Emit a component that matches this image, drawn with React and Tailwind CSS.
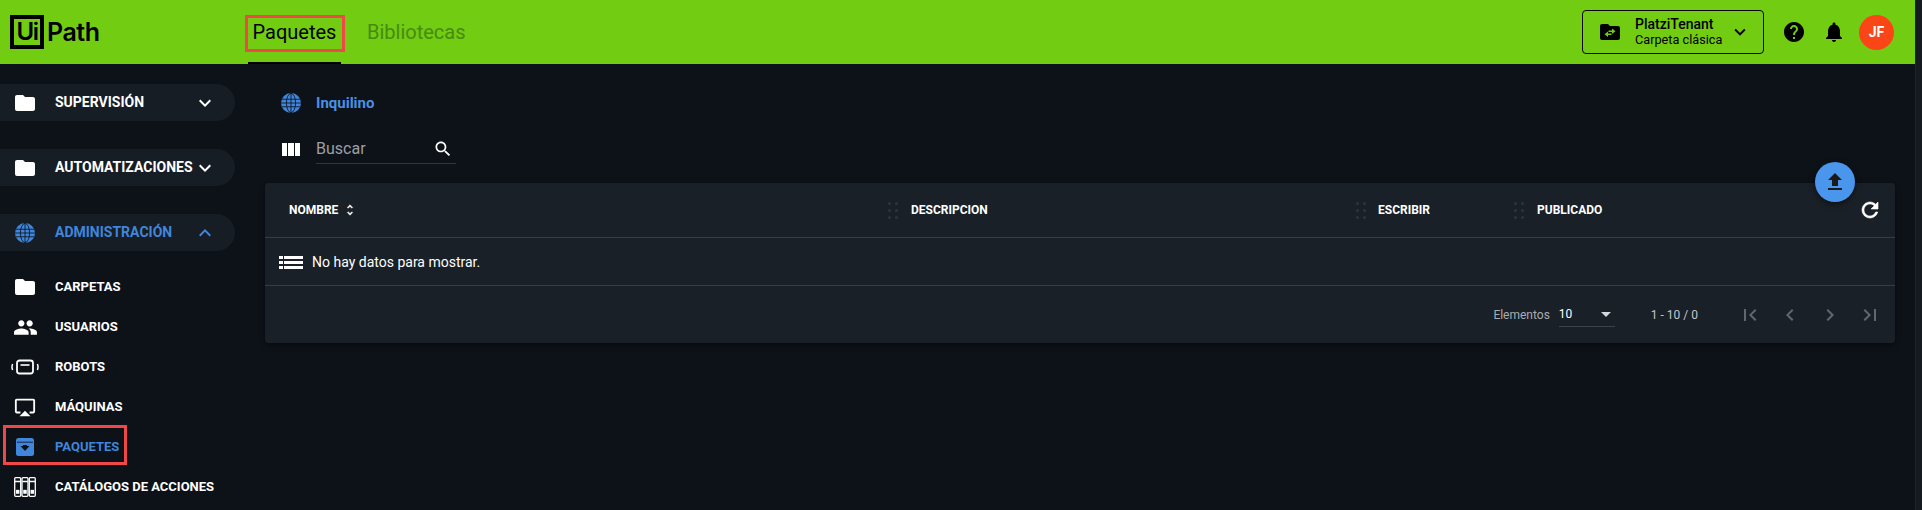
import React from "react";

const P = {
  folder: "M10 4H4c-1.1 0-1.99.9-1.99 2L2 18c0 1.1.9 2 2 2h16c1.1 0 2-.9 2-2V8c0-1.1-.9-2-2-2h-8l-2-2z",
  people: "M16 11c1.66 0 2.99-1.34 2.99-3S17.66 5 16 5c-1.66 0-3 1.34-3 3s1.34 3 3 3zm-8 0c1.66 0 2.99-1.34 2.99-3S9.66 5 8 5C6.34 5 5 6.34 5 8s1.34 3 3 3zm0 2c-2.33 0-7 1.17-7 3.5V19h14v-2.5c0-2.33-4.67-3.5-7-3.5zm8 0c-.29 0-.62.02-.97.05 1.16.84 1.97 1.97 1.97 3.45V19h6v-2.5c0-2.33-4.67-3.5-7-3.5z",
  airplay: "M6 22h12l-6-6zM21 3H3c-1.1 0-2 .9-2 2v12c0 1.1.9 2 2 2h4v-2H3V5h18v12h-4v2h4c1.1 0 2-.9 2-2V5c0-1.1-.9-2-2-2z",
  search: "M15.5 14h-.79l-.28-.27C15.41 12.59 16 11.11 16 9.5 16 5.91 13.09 3 9.5 3S3 5.91 3 9.5 5.91 16 9.5 16c1.61 0 3.09-.59 4.23-1.57l.27.28v.79l5 4.99L20.49 19l-4.99-5zm-6 0C7.01 14 5 11.99 5 9.5S7.01 5 9.5 5 14 7.01 14 9.5 11.99 14 9.5 14z",
  refresh: "M17.65 6.35C16.2 4.9 14.21 4 12 4c-4.42 0-7.99 3.58-7.99 8s3.57 8 7.99 8c3.73 0 6.84-2.55 7.73-6h-2.08c-.82 2.33-3.04 4-5.65 4-3.31 0-6-2.69-6-6s2.69-6 6-6c1.66 0 3.14.69 4.22 1.78L13 11h7V4l-2.35 2.35z",
  upload: "M9 16h6v-6h4l-7-7-7 7h4zm-4 2h14v2H5z",
  help: "M12 2C6.48 2 2 6.48 2 12s4.48 10 10 10 10-4.48 10-10S17.52 2 12 2zm1 17h-2v-2h2v2zm2.07-7.75l-.9.92C13.45 12.9 13 13.5 13 15h-2v-.5c0-1.1.45-2.1 1.17-2.83l1.24-1.26c.37-.36.59-.86.59-1.41 0-1.1-.9-2-2-2s-2 .9-2 2H8c0-2.21 1.79-4 4-4s4 1.79 4 4c0 .88-.36 1.68-.93 2.25z",
  bell: "M12 22c1.1 0 2-.9 2-2h-4c0 1.1.89 2 2 2zm6-6v-5c0-3.07-1.64-5.64-4.5-6.32V4c0-.83-.67-1.5-1.5-1.5s-1.5.67-1.5 1.5v.68C7.63 5.36 6 7.92 6 11v5l-2 2v1h16v-1l-2-2z",
  first: "M18.41 16.59L13.82 12l4.59-4.59L17 6l-6 6 6 6zM6 6h2v12H6z",
  last: "M5.59 7.41L10.18 12l-4.59 4.59L7 18l6-6-6-6zM16 6h2v12h-2z",
  prev: "M15.41 7.41L14 6l-6 6 6 6 1.41-1.41L10.83 12z",
  next: "M10 6L8.59 7.41 13.17 12l-4.58 4.59L10 18l6-6z",
  down: "M16.59 8.59L12 13.17 7.41 8.59 6 10l6 6 6-6z",
  up: "M12 8l-6 6 1.41 1.41L12 10.83l4.59 4.58L18 14z",
  sort: "M12 5.83L15.17 9l1.41-1.41L12 3 7.41 7.59 8.83 9 12 5.83zm0 12.34L8.83 15l-1.41 1.41L12 21l4.59-4.59L15.17 15 12 18.17z",
};

function Icon({ d, className }) {
  return (
    <svg viewBox="0 0 24 24" fill="currentColor" className={className}>
      <path d={d} />
    </svg>
  );
}

function Globe({ className }) {
  return (
    <svg viewBox="0 0 24 24" fill="none" stroke="#0d1219" strokeWidth="1" className={className}>
      <circle cx="12" cy="12" r="12" fill="#3f86dc" stroke="none" />
      <ellipse cx="12" cy="12" rx="5.5" ry="11.5" />
      <path d="M12 0v24M1 7.5h22M0 12h24M1 16.5h22" />
    </svg>
  );
}

function RobotIcon({ className }) {
  return (
    <svg viewBox="0 0 28 16" fill="none" stroke="currentColor" className={className}>
      <rect x="6" y="1.5" width="16" height="13" rx="2.5" strokeWidth="1.8" />
      <path d="M9.5 6h9" strokeWidth="1.6" />
      <path d="M1.6 5q-1.2 3 0 6M26.4 5q1.2 3 0 6" strokeWidth="1.5" />
    </svg>
  );
}

function PackageIcon({ className }) {
  return (
    <svg viewBox="0 0 18 18" className={className}>
      <rect width="18" height="18" rx="2.5" fill="#3f86dc" />
      <path d="M1 4.2h16" stroke="#0d1219" strokeWidth="0.8" />
      <path d="M4.5 8h9L9 13z" fill="#0d1219" />
      <rect x="7" y="7" width="4" height="2" fill="#0d1219" />
    </svg>
  );
}

function CatalogIcon({ className }) {
  return (
    <svg viewBox="0 0 22 20" fill="none" stroke="currentColor" strokeWidth="1.3" className={className}>
      <rect x="0.7" y="0.7" width="6" height="18.6" rx="1" />
      <rect x="8" y="0.7" width="6" height="18.6" rx="1" />
      <rect x="15.3" y="0.7" width="6" height="18.6" rx="1" />
      <path d="M1 4.5h5.5M8.3 4.5h5.5M15.6 4.5h5.5" />
      <rect x="2.6" y="13.5" width="2.2" height="2.6" fill="currentColor" />
      <rect x="9.9" y="13.5" width="2.2" height="2.6" fill="currentColor" />
      <rect x="17.2" y="13.5" width="2.2" height="2.6" fill="currentColor" />
    </svg>
  );
}

function FolderSwap({ className }) {
  return (
    <svg viewBox="0 0 20 16" className={className}>
      <path d="M8 0H2C.9 0 0 .9 0 2v12c0 1.1.9 2 2 2h16c1.1 0 2-.9 2-2V4c0-1.1-.9-2-2-2h-8L8 0z" fill="#000" />
      <path d="M12 4.5l3.5 2.7L12 9.9V8H8.5V6.4H12zM8 7.5v1.9h3.5V11H8v1.9L4.5 10.2z" fill="#72cc12" />
    </svg>
  );
}

function DragDots() {
  return (
    <div className="grid grid-cols-2 gap-x-[4px] gap-y-[4px] w-[10px]">
      {[0, 1, 2, 3, 4, 5].map((i) => (
        <span key={i} className="w-[3px] h-[3px] rounded-full bg-[#2e353d]" />
      ))}
    </div>
  );
}

function Pill({ icon, label, chevron, active }) {
  return (
    <div
      className={`flex items-center h-[37px] w-[235px] rounded-r-[19px] bg-[#171d25] text-[14px] font-bold ${
        active ? "text-[#3f86dc]" : "text-white"
      }`}
    >
      <div className="w-[50px] mr-[5px] flex justify-center shrink-0">{icon}</div>
      <span className="flex-1 whitespace-nowrap">{label}</span>
      <Icon d={chevron} className="w-[24px] h-[24px] mr-[18px] shrink-0" />
    </div>
  );
}

function SubItem({ icon, label, active, boxed }) {
  return (
    <div
      className={`relative flex items-center h-[40px] text-[13px] font-bold ${
        active ? "text-[#3f86dc]" : "text-white"
      }`}
    >
      <div className="w-[50px] mr-[5px] flex justify-center shrink-0 text-white">{icon}</div>
      <span className="whitespace-nowrap">{label}</span>
      {boxed && (
        <div className="absolute left-[3px] top-[-2px] w-[124px] h-[40px] border-[3px] border-[#f04848]" />
      )}
    </div>
  );
}

function Sidebar() {
  return (
    <div className="w-[265px] shrink-0 pt-[20px] overflow-hidden">
      <Pill
        icon={<Icon d={P.folder} className="w-[24px] h-[24px] text-white" />}
        label="SUPERVISIÓN"
        chevron={P.down}
      />
      <div className="h-[28px]" />
      <Pill
        icon={<Icon d={P.folder} className="w-[24px] h-[24px] text-white" />}
        label="AUTOMATIZACIONES"
        chevron={P.down}
      />
      <div className="h-[28px]" />
      <Pill icon={<Globe className="w-[20px] h-[20px]" />} label="ADMINISTRACIÓN" chevron={P.up} active />
      <div className="h-[16px]" />
      <SubItem icon={<Icon d={P.folder} className="w-[24px] h-[24px]" />} label="CARPETAS" />
      <SubItem icon={<Icon d={P.people} className="w-[25px] h-[25px]" />} label="USUARIOS" />
      <SubItem icon={<RobotIcon className="w-[28px] h-[16px]" />} label="ROBOTS" />
      <SubItem icon={<Icon d={P.airplay} className="w-[22px] h-[22px]" />} label="MÁQUINAS" />
      <SubItem icon={<PackageIcon className="w-[18px] h-[18px]" />} label="PAQUETES" active boxed />
      <SubItem icon={<CatalogIcon className="w-[22px] h-[20px]" />} label="CATÁLOGOS DE ACCIONES" />
    </div>
  );
}

function Header() {
  return (
    <div className="flex items-center h-[64px] bg-[#72cc12] shrink-0">
      <div className="flex items-center w-[248px] pl-[10px] shrink-0 text-black font-['Inter',sans-serif] font-semibold">
        <div className="flex items-center justify-center w-[34px] h-[34px] border-[4px] border-black text-[24px] leading-none tracking-[-1.5px]">
          Ui
        </div>
        <span className="ml-[3px] text-[25px] leading-none tracking-[-0.5px]">Path</span>
      </div>
      <div className="relative flex items-center justify-center h-[64px] w-[93px] text-[20px] text-black">
        Paquetes
        <div className="absolute left-0 right-0 bottom-0 h-[2px] bg-black" />
        <div className="absolute left-[-3px] top-[15px] w-[100px] h-[37px] border-[3px] border-[#f04848]" />
      </div>
      <div className="ml-[26px] text-[20px] text-[#468a0f]">Bibliotecas</div>
      <div className="flex-1" />
      <div className="flex items-center w-[182px] h-[44px] border border-black rounded-[4px] text-black">
        <FolderSwap className="w-[20px] h-[16px] ml-[17px] shrink-0" />
        <div className="ml-[15px] flex-1 leading-[15px]">
          <div className="text-[14px] font-medium">PlatziTenant</div>
          <div className="text-[12.7px]">Carpeta clásica</div>
        </div>
        <Icon d={P.down} className="w-[22px] h-[22px] mr-[12px] shrink-0" />
      </div>
      <Icon d={P.help} className="w-[24px] h-[24px] ml-[18px] text-black" />
      <Icon d={P.bell} className="w-[24px] h-[24px] ml-[16px] text-black" />
      <div className="flex items-center justify-center w-[35px] h-[35px] ml-[13px] mr-[21px] rounded-full bg-[#fa4616] text-white text-[14px] font-bold">
        JF
      </div>
    </div>
  );
}

function Card() {
  return (
    <div className="relative mt-[19px] h-[160px] rounded-[4px] bg-[#1a2027] shadow-[0_2px_6px_rgba(0,0,0,0.4)]">
      <div className="absolute right-[40px] top-[-21px] flex items-center justify-center w-[40px] h-[40px] rounded-full bg-[#4a96ec] text-[#1a1a1a] shadow-[0_2px_6px_rgba(0,0,0,0.5)]">
        <Icon d={P.upload} className="w-[24px] h-[24px]" />
      </div>
      <div className="grid grid-cols-[623px_468px_158px_1fr] items-center h-[55px] border-b border-[#383e45] text-[12px] font-bold text-white">
        <div className="flex items-center pl-[24px]">
          NOMBRE
          <Icon d={P.sort} className="w-[14px] h-[14px] ml-[5px] stroke-current stroke-[0.8]" />
        </div>
        <div className="flex items-center gap-[13px]">
          <DragDots />
          DESCRIPCION
        </div>
        <div className="flex items-center gap-[12px]">
          <DragDots />
          ESCRIBIR
        </div>
        <div className="flex items-center gap-[13px]">
          <DragDots />
          PUBLICADO
          <div className="flex-1" />
          <Icon d={P.refresh} className="w-[24px] h-[24px] mr-[13px] stroke-current stroke-[0.6]" />
        </div>
      </div>
      <div className="flex items-center h-[48px] pt-[2px] pl-[14px] border-b border-[#383e45] text-[14px] text-white">
        <div className="grid grid-cols-[4px_19px] gap-x-[1px] gap-y-[2px] mr-[9px]">
          {[0, 1, 2].map((i) => (
            <React.Fragment key={i}>
              <span className="h-[3px] bg-white" />
              <span className="h-[3px] bg-white" />
            </React.Fragment>
          ))}
        </div>
        No hay datos para mostrar.
      </div>
      <div className="flex items-center justify-end h-[57px] text-[12px]">
        <span className="text-[#a9adb1]">Elementos</span>
        <div className="flex items-center justify-between w-[56px] h-[24px] ml-[9px] border-b border-[#3c4249] text-white">
          10
          <span className="w-0 h-0 mr-[4px] border-x-[5px] border-x-transparent border-t-[5px] border-t-[#d6d8da]" />
        </div>
        <span className="ml-[36px] text-[#c3c6c9]">1 - 10 / 0</span>
        <div className="flex items-center ml-[40px] mr-[13px] gap-[16px] text-[#62676d]">
          <Icon d={P.first} className="w-[24px] h-[24px]" />
          <Icon d={P.prev} className="w-[24px] h-[24px]" />
          <Icon d={P.next} className="w-[24px] h-[24px]" />
          <Icon d={P.last} className="w-[24px] h-[24px]" />
        </div>
      </div>
    </div>
  );
}

export default function App() {
  return (
    <div className="flex w-[1922px] h-[510px] overflow-hidden bg-[#0d1219] font-['Roboto',sans-serif]">
      <div className="flex flex-col w-[1915px]">
        <Header />
        <div className="flex flex-1 min-h-0">
          <Sidebar />
          <div className="flex-1 pr-[20px] pt-[28px]">
            <div className="flex items-center h-[22px] pl-[16px]">
              <Globe className="w-[20px] h-[20px]" />
              <span className="ml-[15px] text-[15px] font-bold text-[#4a90e2]">Inquilino</span>
            </div>
            <div className="flex items-center mt-[21px] h-[29px] pl-[17px]">
              <div className="grid grid-cols-3 gap-[1px] w-[18px] h-[13px]">
                <span className="bg-white" />
                <span className="bg-white" />
                <span className="bg-white" />
              </div>
              <div className="flex items-center w-[140px] h-[29px] ml-[16px] border-b border-[#30363d]">
                <span className="flex-1 text-[16px] text-[#9c9fa3]">Buscar</span>
                <Icon d={P.search} className="w-[20px] h-[20px] mr-[3px] text-white" />
              </div>
            </div>
            <Card />
          </div>
        </div>
      </div>
      <div className="w-[7px] bg-[#151a20] border-l border-[#1f2329]" />
    </div>
  );
}
